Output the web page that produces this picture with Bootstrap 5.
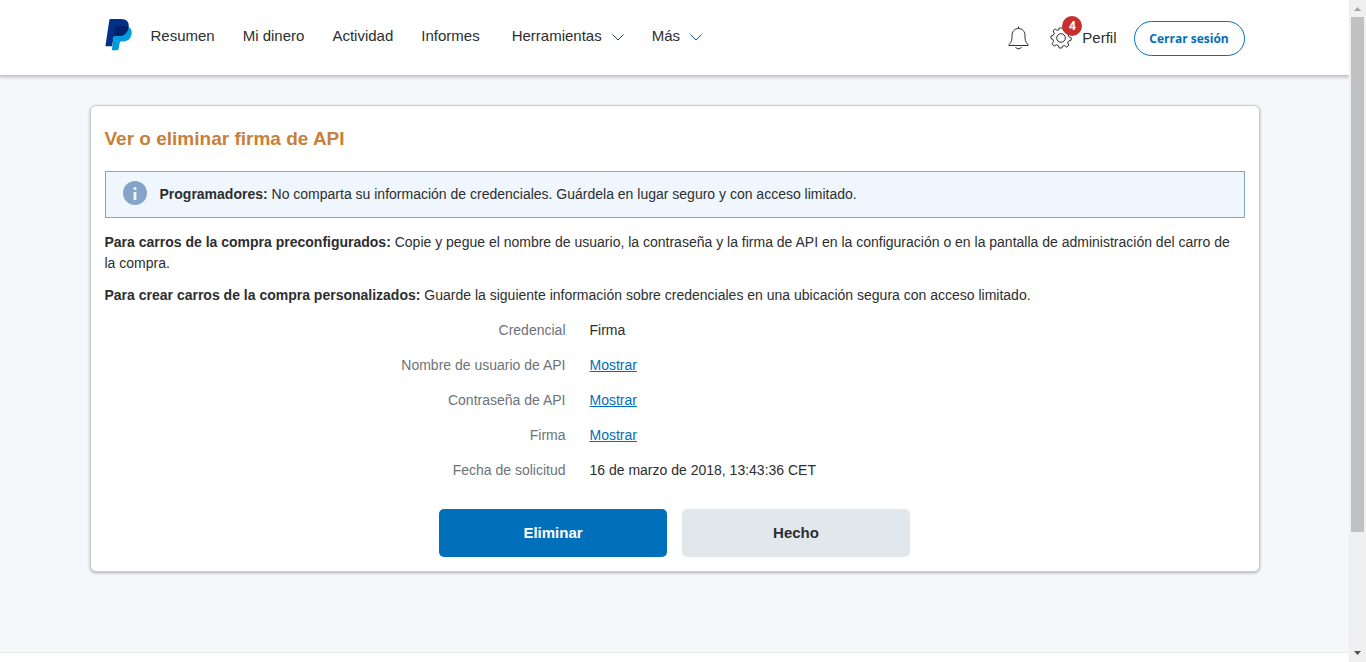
<!DOCTYPE html>
<html lang="es">
<head>
<meta charset="utf-8">
<meta name="viewport" content="width=device-width, initial-scale=1">
<title>Ver o eliminar firma de API - PayPal</title>
<link rel="stylesheet" href="https://cdn.jsdelivr.net/npm/bootstrap@5.3.0/dist/css/bootstrap.min.css">
<style>
  body { font-family: "Liberation Sans", Arial, sans-serif; font-size: 14px; line-height: 21px; color: #2c2e2f; background: #f5f7fb; }
  .page-wrap { max-width: 1170px; width: 100%; margin: 0 auto; }
  .site-header { background: #fff; box-shadow: 0 1px 4px 1px rgba(0,0,0,.25); height: 75px; }
  .header-inner { padding: 1px 15px 0; }
  .site-header a { color: #2c2e2f; font-size: 15px; text-decoration: none; }
  .brand-link { padding-bottom: 6px; }
  .main-links { gap: 28px; padding: 0 0 6px 19px; }
  .main-links svg { margin-left: 10px; }
  .extra-links { gap: 28px; margin-left: 4px; }
  .profile-link { gap: 10px; margin-left: 21px; }
  .profile-label { padding-bottom: 2px; }
  .gear-box { width: 22px; height: 22px; }
  .count-badge { top: -11px; left: 12px; width: 20px; height: 20px; border-radius: 50%; background: #c72e2e; color: #fff; font: 700 12px/20px "Open Sans", sans-serif; text-align: center; }
  .btn-logout { border: 1px solid #0070ba; border-radius: 18px; color: #0070ba; background: #fff; width: 111px; height: 35px; padding: 0; font: 700 12px/33px "Open Sans", sans-serif; margin-left: 17px; }
  .panel { background: #fff; border: 1px solid #c9cccc; border-radius: 6px; box-shadow: 0 1px 3px rgba(0,0,0,.3); margin-top: 30px; padding: 20px 14px 14px; }
  .panel h1 { color: #c88039; font-size: 19px; line-height: 25px; font-weight: 700; margin-bottom: 20px; }
  .notice { background: #eff6fe; border: 1px solid #84a4c9; padding: 9px 17px 12px; gap: 13px; margin-bottom: 14px; }
  .notice div { padding-top: 3px; }
  .panel p { margin-bottom: 11px; }
  .cred-list dt { font-weight: 400; color: #6c7378; }
  .cred-list a { color: #0070ba; }
  .cred-list { row-gap: 14px; margin: 14px -12px 28px; }
  .actions { gap: 15px; }
  .actions .btn { width: 20%; height: 48px; border: 0; border-radius: 5px; font-size: 15px; font-weight: 700; }
  .btn-remove, .btn-remove:hover { background: #0070ba; color: #fff; }
  .btn-done, .btn-done:hover { background: #e1e7eb; color: #2c2e2f; }
  .site-footer { background: #fff; border-top: 1px solid #e6e7e9; height: 10px; }
  .scroll-rail { width: 17px; background: #f0f0f0; height: 100vh; }
  .scroll-rail svg { display: block; flex: none; }
  .scroll-thumb { background: #c1c1c1; width: 13px; height: 82%; }
</style>
</head>
<body class="d-flex">
<div class="d-flex flex-column flex-grow-1 min-vh-100">
  <header class="site-header d-flex">
    <div class="page-wrap header-inner d-flex align-items-center">
      <a href="#" class="brand-link" aria-label="PayPal"><svg class="d-block" width="27" height="32" viewBox="0 0 27 32">
        <path fill="#009cde" d="M10 8h13.5C26.500 9.500 27.200 12.500 26.500 15.500C25.500 20.500 22 22.500 17.500 22.500H16C15.300 22.500 15 22.900 14.800 23.600L13.500 30.300C13.400 31 13 31.300 12.400 31.300H7.500C7 31.300 6.800 31 6.900 30.500Z"/>
        <path fill="#003087" d="M5.500 0H16C21.500 0 24.500 3 23.600 8.200C22.500 14 19 17 13.200 17H10C9.100 17 8.700 17.500 8.500 18.400L7.100 27.300H1.200C.6 27.300.4 27 .5 26.400L4.300 1.200C4.400.4 4.800 0 5.500 0Z"/>
        <path fill="#012169" d="M10 8C10.200 7.300 10.700 7 11.400 7H19C21 7 22.500 7.300 23.600 8.200C22.500 14 19 17 13.200 17H10C9.300 17 8.900 17.300 8.600 18Z"/>
      </svg></a>
      <nav class="main-links d-flex align-items-center" aria-label="Principal">
        <a href="#">Resumen</a><a href="#">Mi dinero</a><a href="#">Actividad</a><a href="#">Informes</a>
        <div class="extra-links d-flex">
          <a href="#">Herramientas<svg width="12" height="8" viewBox="0 0 12 8" fill="none" stroke="#2c3e50"><path d="M.5 1.500 6 7l5.500-5.500"/></svg></a>
          <a href="#">Más<svg width="12" height="8" viewBox="0 0 12 8" fill="none" stroke="#00558c"><path d="M.5 1.500 6 7l5.500-5.500"/></svg></a>
        </div>
      </nav>
      <div class="d-flex align-items-center ms-auto">
        <a href="#" aria-label="Notificaciones"><svg class="d-block" width="21" height="24" viewBox="0 0 21 24" fill="none" stroke="#2c2e2f"><path d="M10.500.5v2M1 18.500C3.800 16 4 13.500 4 10C4 5.500 6.500 2.500 10.500 2.500S17 5.500 17 10C17 13.500 17.200 16 20 18.500V19.500H1ZM7.500 21.500Q10.500 24.500 13.500 21.500"/></svg></a>
        <a href="#" class="profile-link d-flex align-items-center">
          <span class="gear-box position-relative d-block"><svg class="d-block" width="22" height="22" viewBox="-11 -11 22 22" fill="none" stroke="#2c2e2f"><circle r="4.300"/><path d="M-1.800-10H1.800L2.600-7.200 4.600-6.300 7-7.900 9.100-5.500 7.400-3 7.800-1.300 10.200-.3V2.200L7.700 3 6.600 5 7.900 7.200 5.800 9.200 3.500 7.500 1.600 8.200.8 10H-1.800L-2.600 7.700-4.500 6.800-6.800 8-9 5.800-7.500 3.500-8 1.500-10 .6V-2L-7.700-2.800-6.700-4.800-8-7-5.800-9-3.500-7.600-2.300-8Z" stroke-linejoin="round"/></svg><span class="count-badge position-absolute">4</span></span>
          <span class="profile-label">Perfil</span></a>
        <button type="button" class="btn btn-logout">Cerrar sesión</button>
      </div>
    </div>
  </header>
  <main class="flex-grow-1">
    <div class="page-wrap">
      <section class="panel">
        <h1>Ver o eliminar firma de API</h1>
        <div class="notice d-flex align-items-start">
          <svg class="flex-shrink-0" width="24" height="24" viewBox="0 0 24 24"><circle cx="12" cy="12" r="12" fill="#84a4c9"/><circle cx="12" cy="7.500" r="1.600" fill="#eff6fe"/><path fill="#eff6fe" d="M10.600 11h2.800v8h-2.800z"/></svg>
          <div><strong>Programadores:</strong> No comparta su información de credenciales. Guárdela en lugar seguro y con acceso limitado.</div>
        </div>
        <p><strong>Para carros de la compra preconfigurados:</strong> Copie y pegue el nombre de usuario, la contraseña y la firma de API en la configuración o en la pantalla de administración del carro de la compra.</p>
        <p><strong>Para crear carros de la compra personalizados:</strong> Guarde la siguiente información sobre credenciales en una ubicación segura con acceso limitado.</p>
        <dl class="row cred-list">
          <dt class="col-5 text-end">Credencial</dt><dd class="col-7 mb-0">Firma</dd>
          <dt class="col-5 text-end">Nombre de usuario de API</dt><dd class="col-7 mb-0"><a href="#">Mostrar</a></dd>
          <dt class="col-5 text-end">Contraseña de API</dt><dd class="col-7 mb-0"><a href="#">Mostrar</a></dd>
          <dt class="col-5 text-end">Firma</dt><dd class="col-7 mb-0"><a href="#">Mostrar</a></dd>
          <dt class="col-5 text-end">Fecha de solicitud</dt><dd class="col-7 mb-0">16 de marzo de 2018, 13:43:36 CET</dd>
        </dl>
        <div class="actions d-flex justify-content-center">
          <button type="button" class="btn btn-remove">Eliminar</button>
          <button type="button" class="btn btn-done">Hecho</button>
        </div>
      </section>
    </div>
  </main>
  <footer class="site-footer"></footer>
</div>
<div class="scroll-rail d-flex flex-column align-items-center flex-shrink-0 sticky-top" aria-hidden="true">
  <svg width="17" height="17" viewBox="0 0 17 17"><path fill="#a3a3a3" d="M5 11h7L8.500 7z"/></svg>
  <div class="flex-grow-1"><div class="scroll-thumb"></div></div>
  <svg width="17" height="17" viewBox="0 0 17 17"><path fill="#505050" d="M5 6h7L8.500 10z"/></svg>
</div>
<script src="https://cdn.jsdelivr.net/npm/bootstrap@5.3.0/dist/js/bootstrap.bundle.min.js"></script>
</body>
</html>
